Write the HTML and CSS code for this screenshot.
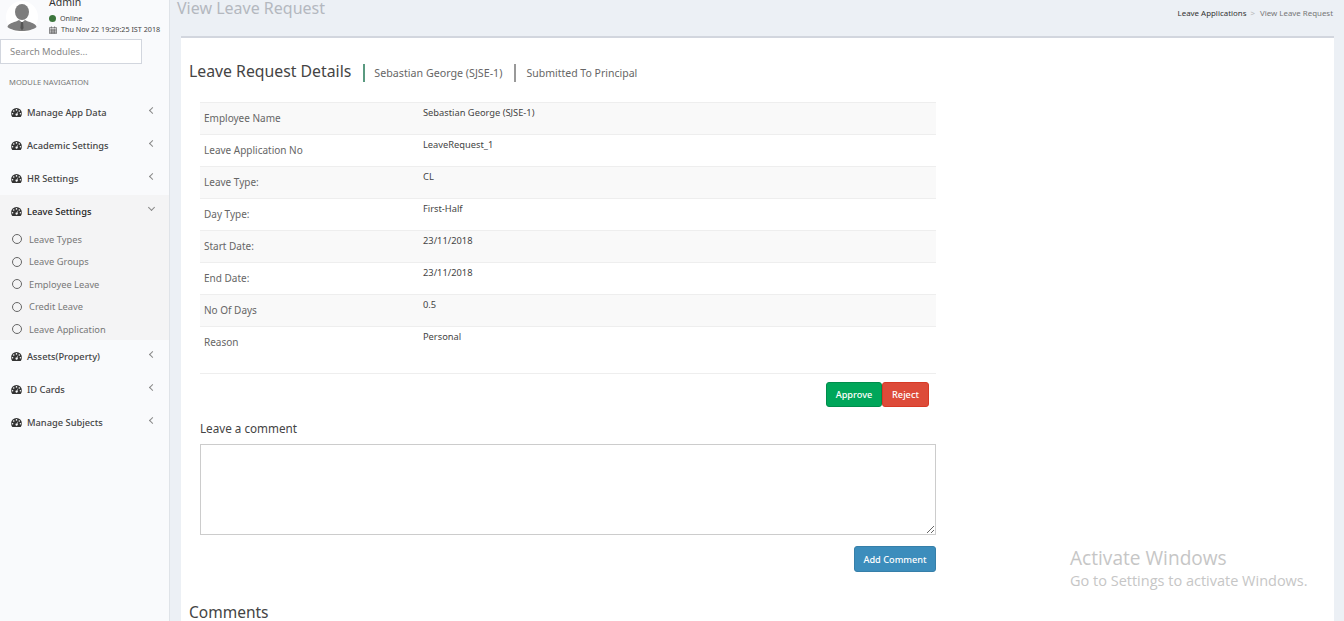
FILE: index.html
```html
<!DOCTYPE html>
<html lang="en">
<head>
<meta charset="utf-8">
<title>View Leave Request</title>
<link rel="stylesheet" href="styles.css">
</head>
<body>
<svg class="defs" width="0" height="0" aria-hidden="true">
  <symbol id="gauge" viewBox="0 0 12 10">
    <path fill-rule="evenodd" d="M6 0a6 6 0 0 1 6 6c0 1.300-.4 2.600-1.100 3.600-.2.300-.5.400-.8.400H1.900c-.3 0-.6-.1-.8-.4A6 6 0 0 1 0 6a6 6 0 0 1 6-6zM6 1.200a.9.900 0 1 0 0 1.800.9.900 0 0 0 0-1.800zM2.900 2.500a.9.900 0 1 0 0 1.800.9.900 0 0 0 0-1.800zM9.100 2.500a.9.900 0 1 0 0 1.800.9.900 0 0 0 0-1.800zM1.600 5.500a.9.900 0 1 0 0 1.800.9.900 0 0 0 0-1.800zM10.400 5.500a.9.900 0 1 0 0 1.800.9.900 0 0 0 0-1.800zM7.700 3.500 6.200 6a1.300 1.300 0 1 0 .9.400z"/>
  </symbol>
</svg>
<aside class="sidebar">
  <div class="user">
    <svg class="avatar" viewBox="0 0 32 32" aria-hidden="true">
      <circle cx="16" cy="16" r="16" fill="#fff"/>
      <ellipse cx="16" cy="11" rx="7" ry="8" fill="#7d7d7d"/>
      <path d="M1.500 26c.5-2.500 3-4 8.500-5.500l3-1.500 3 2.500 3-2.500 3 1.500c5.500 1.500 8 3 8.500 5.500-3 2.500-8.500 4-14.500 4s-11.500-1.500-14.500-4z" fill="#7d7d7d"/>
      <path d="M15 21h2l.6 6-1.600 2.500-1.600-2.500z" fill="#555"/>
    </svg>
    <div class="user-info">
      <div class="user-name">Admin</div>
      <div class="user-line"><span class="dot"></span>Online</div>
      <div class="user-line">
        <svg class="cal" viewBox="0 0 10 10" aria-hidden="true"><path d="M.5 2h9v7.500h-9zM.5 4h9M3 .5v2.500M7 .5v2.500M.5 6h9M.5 7.800h9M3 4v5.500M5 4v5.500M7 4v5.500" fill="none" stroke="#555" stroke-width=".8"/></svg>Thu Nov 22 19:29:25 IST 2018
      </div>
    </div>
  </div>
  <input class="search" type="text" placeholder="Search Modules...">
  <div class="nav-label">MODULE NAVIGATION</div>
  <nav class="nav">
    <a class="nav-item"><svg class="gauge"><use href="#gauge"/></svg><span>Manage App Data</span><i class="chev"></i></a>
    <a class="nav-item"><svg class="gauge"><use href="#gauge"/></svg><span>Academic Settings</span><i class="chev"></i></a>
    <a class="nav-item"><svg class="gauge"><use href="#gauge"/></svg><span>HR Settings</span><i class="chev"></i></a>
    <div class="nav-group">
      <a class="nav-item active"><svg class="gauge"><use href="#gauge"/></svg><span>Leave Settings</span><i class="chev down"></i></a>
      <a class="sub-item"><i class="ring"></i>Leave Types</a>
      <a class="sub-item"><i class="ring"></i>Leave Groups</a>
      <a class="sub-item"><i class="ring"></i>Employee Leave</a>
      <a class="sub-item"><i class="ring"></i>Credit Leave</a>
      <a class="sub-item"><i class="ring"></i>Leave Application</a>
    </div>
    <a class="nav-item"><svg class="gauge"><use href="#gauge"/></svg><span>Assets(Property)</span><i class="chev"></i></a>
    <a class="nav-item"><svg class="gauge"><use href="#gauge"/></svg><span>ID Cards</span><i class="chev"></i></a>
    <a class="nav-item"><svg class="gauge"><use href="#gauge"/></svg><span>Manage Subjects</span><i class="chev"></i></a>
  </nav>
</aside>
<main class="main">
  <header class="page-head">
    <h1>View Leave Request</h1>
    <div class="crumbs"><b>Leave Applications</b><span class="sep">&gt;</span><span>View Leave Request</span></div>
  </header>
  <section class="box">
    <div class="box-title">
      <h2>Leave Request Details</h2>
      <span class="meta first">Sebastian George (SJSE-1)</span>
      <span class="meta">Submitted To Principal</span>
    </div>
    <div class="inner">
      <table class="details">
        <tr><th>Employee Name</th><td>Sebastian George (SJSE-1)</td></tr>
        <tr><th>Leave Application No</th><td>LeaveRequest_1</td></tr>
        <tr><th>Leave Type:</th><td>CL</td></tr>
        <tr><th>Day Type:</th><td>First-Half</td></tr>
        <tr><th>Start Date:</th><td>23/11/2018</td></tr>
        <tr><th>End Date:</th><td>23/11/2018</td></tr>
        <tr><th>No Of Days</th><td>0.5</td></tr>
        <tr class="last"><th>Reason</th><td>Personal</td></tr>
      </table>
      <div class="actions">
        <button class="btn approve" type="button">Approve</button><button class="btn reject" type="button">Reject</button>
      </div>
      <label class="comment-label" for="comment">Leave a comment</label>
      <textarea class="comment" id="comment"></textarea>
      <div class="add-row"><button class="btn add" type="button">Add Comment</button></div>
    </div>
    <h2 class="comments">Comments</h2>
  </section>
</main>
<div class="activate">
  <div class="a1">Activate Windows</div>
  <div class="a2">Go to Settings to activate Windows.</div>
</div>
</body>
</html>
```

FILE: styles.css
```css
* { box-sizing: border-box; }
html, body { height: 100%; }
body {
  margin: 0;
  height: 621px;
  overflow: hidden;
  display: flex;
  background: #ecf0f5;
  font-family: "Noto Sans", "Open Sans", sans-serif;
  color: #333;
}
.defs { position: absolute; }

.sidebar {
  width: 170px;
  flex: none;
  background: #f9fafc;
  border-right: 1px solid #dfe3e8;
  overflow: hidden;
}
.user {
  display: flex;
  height: 38px;
  padding: 0 0 0 6px;
}
.avatar { width: 32px; height: 32px; flex: none; margin-top: 1px; }
.user-info { margin-left: 11px; margin-top: -5px; }
.user-name { font-size: 10.500px; line-height: 14px; color: #333; margin-bottom: 4px; }
.user-line { display: flex; align-items: center; font-size: 7.200px; line-height: 11px; color: #444; white-space: nowrap; }
.dot { width: 7px; height: 7px; border-radius: 50%; background: #3c763d; margin: 0 4px 0 0; }
.cal { width: 8px; height: 8px; margin-right: 4px; }
.search {
  display: block;
  width: 142px;
  height: 25px;
  margin: 1px 0 0 0;
  padding: 0 9px;
  border: 1px solid #d2d6de;
  background: #fff;
  font: 9.400px "Noto Sans", sans-serif;
  color: #555;
}
.search::placeholder { color: #888; opacity: 1; }
.nav-label { font-size: 7.600px; line-height: 12px; color: #777; padding: 12px 0 0 9px; height: 30px; }
.nav { display: flex; flex-direction: column; margin-top: 2px; }
.nav-item {
  position: relative;
  display: flex;
  align-items: center;
  height: 33px;
  padding: 0 0 0 11px;
  font-size: 9.300px;
  font-weight: 500;
  color: #444;
}
.nav-item.active { color: #222; }
.gauge { width: 11px; height: 9px; flex: none; margin-right: 5px; fill: #333; }
.chev {
  position: absolute;
  left: 150px;
  top: 12px;
  width: 5px;
  height: 5px;
  border-left: 1px solid #888;
  border-bottom: 1px solid #888;
  transform: rotate(45deg);
}
.chev.down { left: 149px; top: 10px; transform: rotate(-45deg); }
.nav-group { background: #f4f4f5; height: 145px; }
.sub-item {
  display: flex;
  align-items: center;
  height: 22.500px;
  padding-left: 12px;
  font-size: 9.300px;
  color: #777;
}
.ring { width: 10px; height: 10px; border: 1.500px solid #666; border-radius: 50%; margin-right: 7px; flex: none; }

.main { flex: 1; min-width: 0; display: flex; flex-direction: column; }
.page-head {
  flex: none;
  display: flex;
  justify-content: space-between;
  height: 36px;
  padding: 0 11px 0 7px;
}
.page-head h1 { margin: -4px 0 0; font-size: 16px; line-height: 24px; font-weight: 400; color: #b4b8bf; }
.crumbs { font-size: 7.900px; line-height: 12px; padding-top: 7px; color: #777; }
.crumbs b { font-weight: 400; color: #333; }
.sep { margin: 0 5px 0 4px; color: #bbb; }

.box {
  flex: none;
  height: 640px;
  margin: 0 10px 0 11px;
  background: #fff;
  border-top: 2px solid #d2d6de;
  padding: 0 0 0 8px;
}
.box-title { display: flex; align-items: center; height: 66px; }
.box-title h2 { margin: 0; font-size: 15.800px; line-height: 24px; font-weight: 400; color: #444; }
.meta { font-size: 10.500px; line-height: 18px; color: #666; padding-left: 10px; margin-left: 12px; border-left: 2px solid #999; margin-top: 3px; }
.meta.first { font-size: 10.700px; padding-left: 9px; border-left-color: #5a9a80; }

.inner { width: 736px; margin-left: 11px; }
.details { width: 100%; border-collapse: collapse; margin-top: -2px; }
.details tr { height: 32px; border-top: 1px solid #eee; }
.details tr:nth-child(odd) { background: #f9f9f9; }
.details tr.last { height: 47px; border-bottom: 1px solid #eee; background: #fff; }
.details th {
  width: 223px;
  padding: 0 0 2px 4px;
  font-size: 10px;
  font-weight: 400;
  text-align: left;
  color: #666;
  vertical-align: middle;
}
.details tr.last th { vertical-align: top; padding-top: 8px; }
.details td { padding: 4px 0 0; font-size: 9.300px; line-height: 11px; vertical-align: top; color: #444; }
.actions { display: flex; justify-content: flex-end; padding: 8px 7px 0 0; }
.btn {
  height: 25px;
  border: 1px solid;
  border-radius: 3px;
  font: 500 9.200px "Noto Sans", sans-serif;
  color: #fff;
  padding: 0;
}
.approve { width: 56px; background: #00a65a; border-color: #008d4c; }
.reject { width: 47px; background: #dd4b39; border-color: #d73925; }
.comment-label { display: block; margin-top: 13px; font-size: 11.700px; line-height: 16px; color: #444; }
.comment { display: block; width: 736px; height: 91px; margin-top: 8px; border: 1px solid #ccc; background: #fff; }
.add-row { display: flex; justify-content: flex-end; margin-top: 11px; }
.add { width: 82px; height: 26px; background: #3c8dbc; border-color: #367fa9; }
.comments { margin: 30px 0 0; font-size: 15.500px; line-height: 20px; font-weight: 400; color: #444; }

.activate { position: absolute; left: 1070px; top: 546px; color: #c6c6c6; font-family: "Open Sans", sans-serif; white-space: nowrap; }
.a1 { font-size: 19.100px; line-height: 24px; }
.a2 { font-size: 14.500px; line-height: 21px; }
```
